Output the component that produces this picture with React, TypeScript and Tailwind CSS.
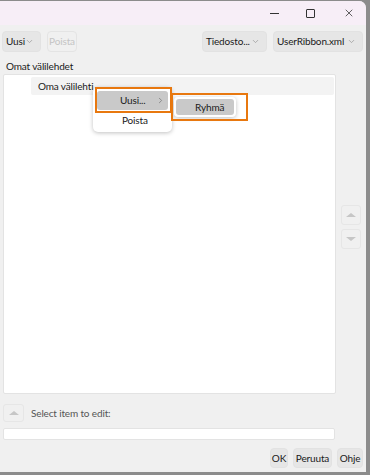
import { ChevronDown, ChevronRight, X } from 'lucide-react'

const font = { fontFamily: 'Lato, "Noto Sans", sans-serif' }

const btnCls =
  'flex items-center bg-[#e6e6e6] border border-[#e2e2e2] rounded-[4px] text-[10px] tracking-[-0.15px] text-[#1a1a1a] whitespace-nowrap'

const txt = 'text-[10px] tracking-[-0.15px] text-[#1a1a1a]'

export default function App() {
  return (
    <div className="w-[370px] h-[475px] bg-[#8c8c8c] pt-[1px] overflow-hidden" style={font}>
      <div className="relative w-[366px] h-[471px] bg-[#f0f0f0] rounded-tr-[7px] flex flex-col">
        {/* title bar */}
        <div className="h-[24px] bg-[#f7eef7] rounded-tr-[7px] flex items-center justify-end text-[#222]">
          <div className="w-[9px] h-[1px] bg-[#333] mr-[27px]" />
          <div className="w-[9px] h-[9px] border border-[#333] rounded-[1px] mr-[28px]" />
          <X size={12} strokeWidth={1.4} className="mr-[11px]" />
        </div>

        {/* toolbar */}
        <div className="flex items-center h-[21px] mt-[6px] px-[2px]">
          <div className={btnCls + ' h-[21px] w-[39px] pl-[3px]'}>
            Uusi
            <ChevronDown size={9} className="ml-auto mr-[6px] text-[#9a9a9a]" />
          </div>
          <div className="ml-[6px] h-[21px] w-[30px] flex items-center justify-center border border-[#e4e4e4] rounded-[4px] text-[10px] tracking-[-0.15px] text-[#c4c4c4]">
            Poista
          </div>
          <div className={btnCls + ' h-[21px] w-[65px] ml-auto pl-[3px]'}>
            Tiedosto...
            <ChevronDown size={9} className="ml-auto mr-[6px] text-[#9a9a9a]" />
          </div>
          <div className={btnCls + ' h-[21px] w-[90px] ml-[6px] mr-[1px] pl-[3px]'}>
            UserRibbon.xml
            <ChevronDown size={9} className="ml-auto mr-[6px] text-[#9a9a9a]" />
          </div>
        </div>

        <div className={txt + ' mt-[7px] ml-[6px] leading-[14px]'}>Omat välilehdet</div>

        {/* tree + side buttons */}
        <div className="flex mt-[1px] px-[3px]">
          <div className="w-[333px] h-[320px] bg-white border border-[#e3e3e3] rounded-[2px] pt-[2px] pr-[1px]">
            <div className={txt + ' ml-[27px] h-[18px] bg-[#f3f3f3] rounded-[2px] flex items-center pl-[7px]'}>
              Oma välilehti
            </div>
          </div>
          <div className="flex flex-col gap-[4px] ml-[5px] mt-[131px]">
            <div className="w-[20px] h-[20px] border border-[#e6e6e6] rounded-[3px] flex items-center justify-center">
              <div className="w-0 h-0 border-l-[5px] border-r-[5px] border-b-[4px] border-l-transparent border-r-transparent border-b-[#c6c6c6]" />
            </div>
            <div className="w-[20px] h-[20px] border border-[#e6e6e6] rounded-[3px] flex items-center justify-center">
              <div className="w-0 h-0 border-l-[5px] border-r-[5px] border-t-[4px] border-l-transparent border-r-transparent border-t-[#c6c6c6]" />
            </div>
          </div>
        </div>

        {/* select item row */}
        <div className="flex items-center mt-[10px] px-[3px]">
          <div className="w-[21px] h-[18px] border border-[#e6e6e6] rounded-[3px] flex items-center justify-center">
            <div className="w-0 h-0 border-l-[5px] border-r-[5px] border-b-[4px] border-l-transparent border-r-transparent border-b-[#c6c6c6]" />
          </div>
          <span className="ml-[7px] text-[10px] tracking-[-0.15px] text-[#555]">Select item to edit:</span>
        </div>
        <div className="mx-[3px] mt-[6px] w-[332px] h-[12px] bg-white border border-[#e3e3e3] rounded-[2px]" />

        {/* bottom buttons */}
        <div className="flex justify-end gap-[5px] mt-[8px] pr-[3px]">
          <div className={btnCls + ' h-[20px] w-[18px] justify-center'}>OK</div>
          <div className={btnCls + ' h-[20px] w-[39px] justify-center'}>Peruuta</div>
          <div className={btnCls + ' h-[20px] w-[26px] justify-center'}>Ohje</div>
        </div>

        {/* context menu */}
        <div className={txt + ' absolute left-[93px] top-[86px] w-[79px] h-[45px] bg-white rounded-[5px] shadow-[0_1px_4px_rgba(0,0,0,0.25)] p-[4px]'}>
          <div className="h-[19px] bg-[#c9c9c9] rounded-[3px] flex items-center pl-[23px]">
            Uusi...
            <ChevronRight size={9} className="ml-auto mr-[3px] text-[#777]" />
          </div>
          <div className="h-[19px] flex items-center pl-[25px] mt-[1px]">Poista</div>
        </div>
        <div className="absolute left-[95px] top-[86px] w-[77px] h-[26px] border-2 border-[#e8780f]" />

        {/* submenu */}
        <div className={txt + ' absolute left-[174px] top-[96px] w-[62px] h-[20px] bg-white rounded-[4px] shadow-[0_1px_4px_rgba(0,0,0,0.25)] p-[2px]'}>
          <div className="h-full bg-[#c9c9c9] rounded-[3px] flex items-center pl-[19px]">Ryhmä</div>
        </div>
        <div className="absolute left-[171px] top-[92px] w-[77px] h-[28px] border-2 border-[#e8780f]" />
      </div>
    </div>
  )
}
